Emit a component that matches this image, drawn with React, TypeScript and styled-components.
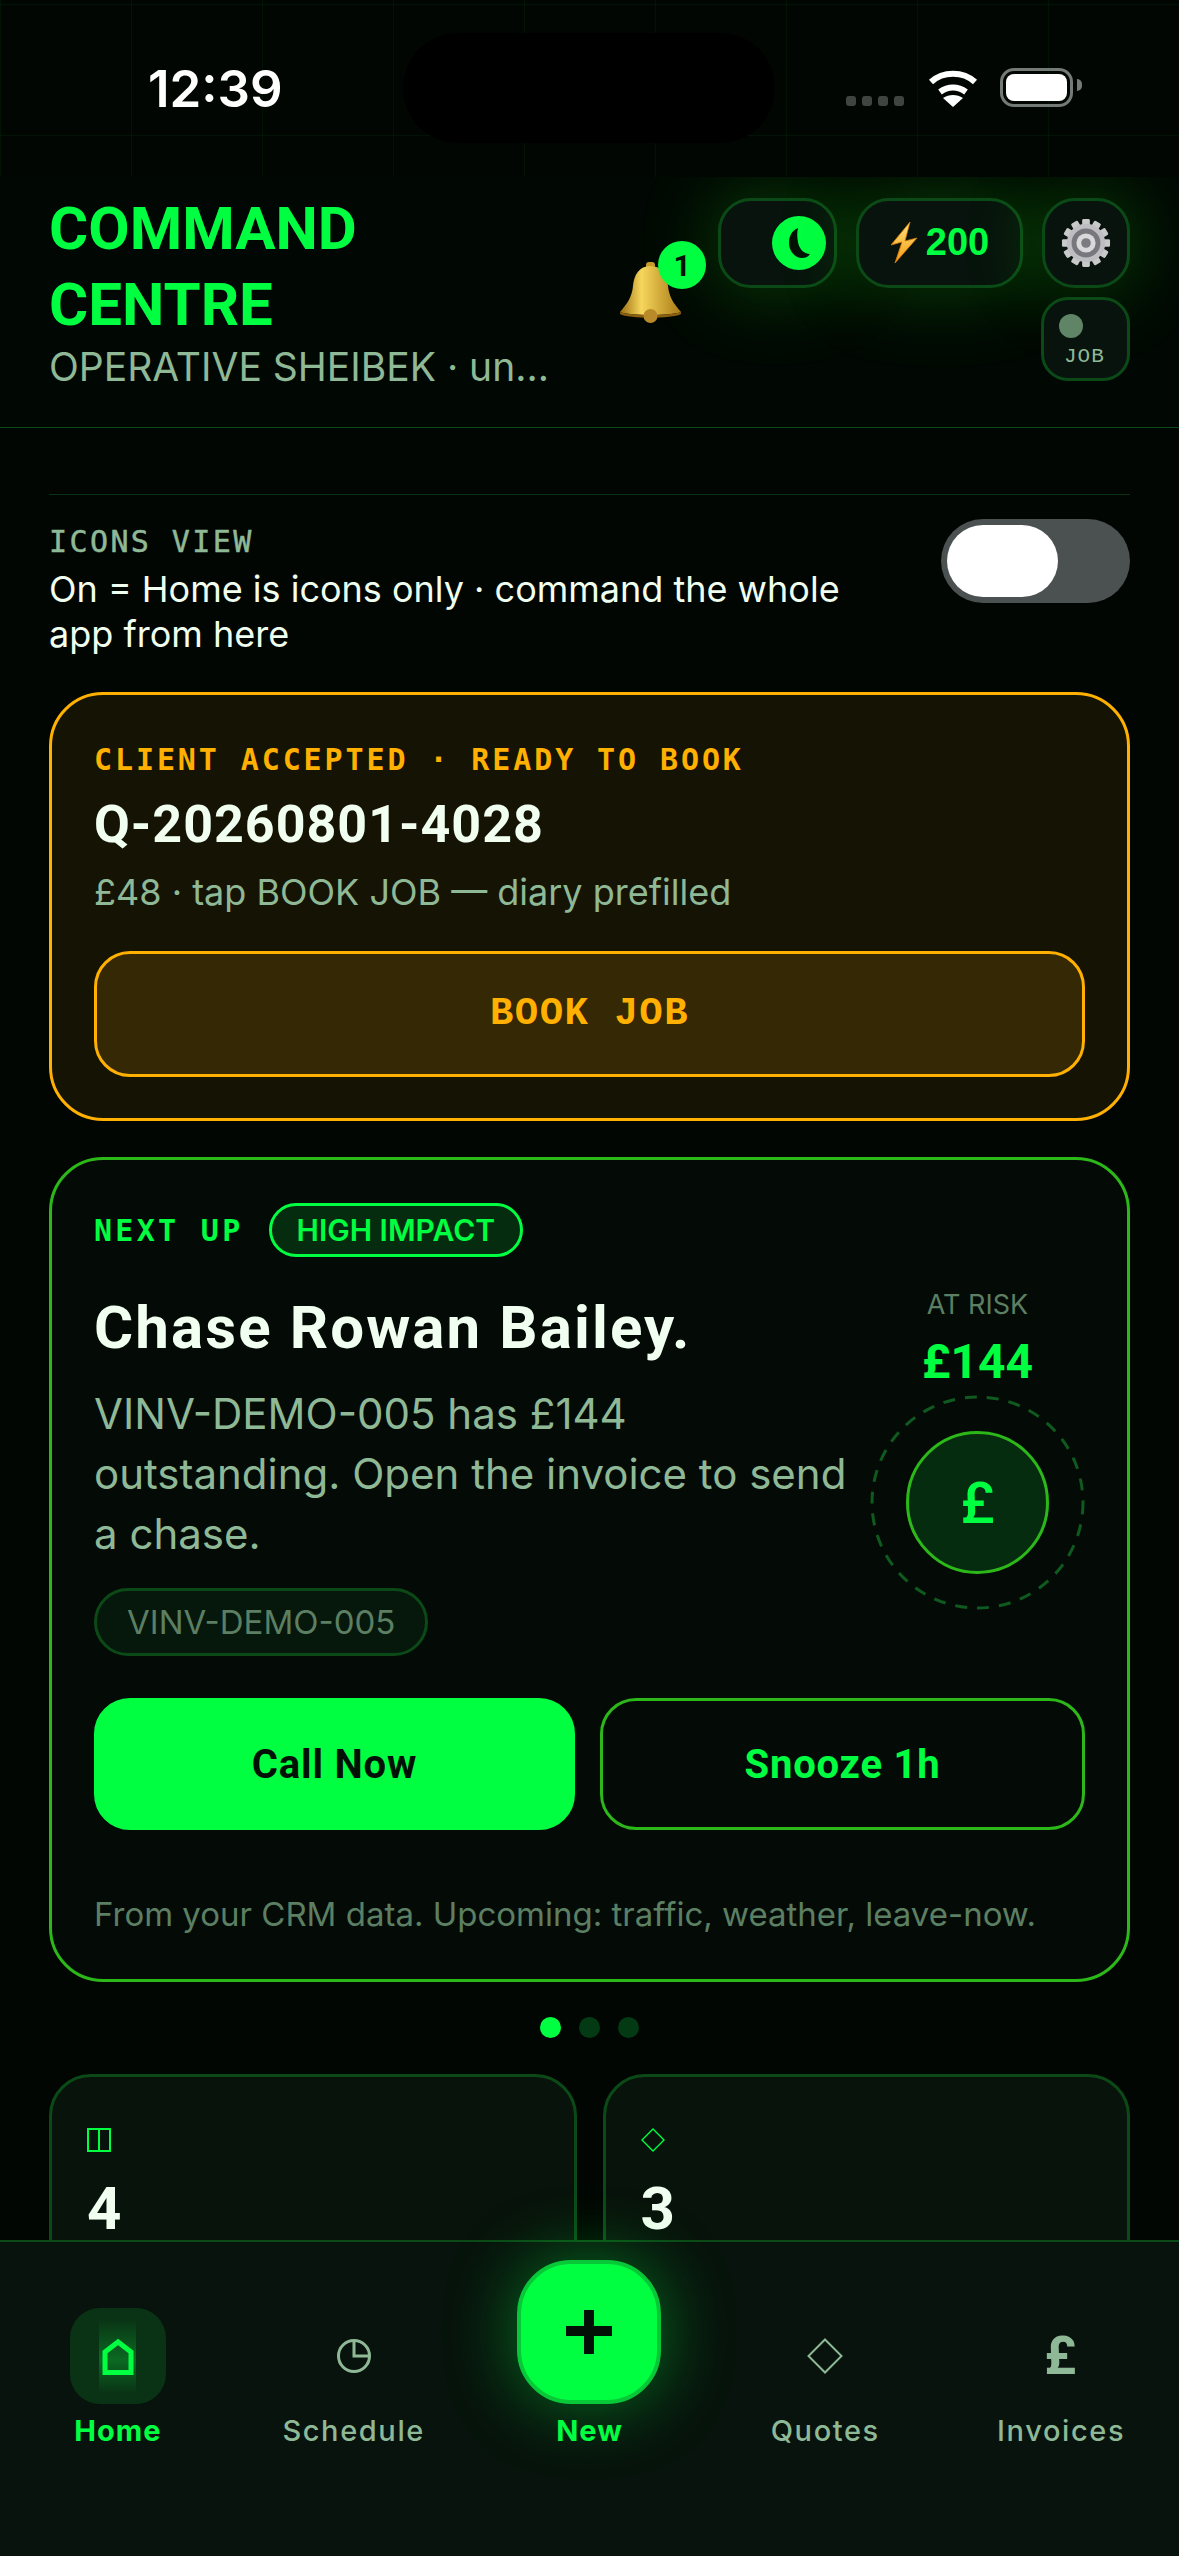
import React from 'react';
import styled, { createGlobalStyle } from 'styled-components';

const GREEN = '#00ff41';
const MUTED = '#8fb996';
const DIM = '#5c7f63';
const WHITE = '#f0fff0';
const AMBER = '#ffb000';
const LINE = '#0b4a17';
const RIM = '#2db81a';
const SANS = '"Inter", "Liberation Sans", sans-serif';
const HEAD = '"Roboto", "Liberation Sans", sans-serif';
const MONO = '"Liberation Mono", "DejaVu Sans Mono", monospace';
const LABEL = '"DejaVu Sans Mono", "Liberation Mono", monospace';

const GlobalStyle = createGlobalStyle`
  html, body {
    margin: 0;
    padding: 0;
    background: #010602;
  }
  * {
    box-sizing: border-box;
  }
`;

const Screen = styled.div`
  width: 1179px;
  height: 2556px;
  display: flex;
  flex-direction: column;
  overflow: hidden;
  background: #010602;
  font-family: ${SANS};
`;

const StatusBar = styled.div`
  height: 177px;
  flex: none;
  display: flex;
  align-items: flex-start;
  padding: 33px 0 0 148px;
  background-color: #010602;
  background-image:
    linear-gradient(rgba(0, 255, 65, 0.05) 1px, transparent 1px),
    linear-gradient(90deg, rgba(0, 255, 65, 0.05) 1px, transparent 1px);
  background-size: 131px 131px;
  background-position: 131px 135px;
`;

const Clock = styled.div`
  width: 255px;
  padding-top: 25px;
  font-size: 51px;
  line-height: 62px;
  font-weight: 600;
  color: #fff;
`;

const Island = styled.div`
  width: 372px;
  height: 110px;
  border-radius: 55px;
  background: #000;
`;

const StatusIcons = styled.div`
  height: 39px;
  margin: 35px 0 0 71px;
  display: flex;
  align-items: flex-end;
`;

const SignalDots = styled.div`
  display: flex;
  gap: 6px;
  margin: 0 24px 1px 0;
`;

const SignalDot = styled.span`
  width: 10px;
  height: 10px;
  border-radius: 3px;
  background: #3f4441;
`;

const BatteryShell = styled.div`
  position: relative;
  width: 73px;
  height: 39px;
  margin-left: 22px;
  padding: 3px;
  border: 3px solid #747a76;
  border-radius: 14px;
  &::after {
    content: '';
    position: absolute;
    right: -12px;
    top: 8px;
    width: 5px;
    height: 12px;
    border-radius: 0 6px 6px 0;
    background: #747a76;
  }
`;

const BatteryFill = styled.div`
  width: 100%;
  height: 100%;
  border-radius: 8px;
  background: #fff;
`;

const Header = styled.header`
  height: 251px;
  flex: none;
  display: flex;
  align-items: center;
  padding: 0 49px 26px;
  overflow: hidden;
  background: #010803;
  border-bottom: 1px solid ${LINE};
`;

const TitleBlock = styled.div`
  flex: 1;
  min-width: 0;
`;

const Title = styled.h1`
  margin: 0;
  padding-top: 2px;
  font-family: ${HEAD};
  font-size: 60px;
  line-height: 76px;
  font-weight: 700;
  color: ${GREEN};
`;

const Subtitle = styled.div`
  margin-top: 1px;
  font-size: 39px;
  line-height: 46px;
  color: ${MUTED};
`;

const BellWrap = styled.div`
  position: relative;
  width: 87px;
  height: 62px;
  margin: 8px 12px 0 0;
`;

const Badge = styled.span`
  position: absolute;
  top: -21px;
  right: 0;
  width: 48px;
  height: 48px;
  border-radius: 50%;
  display: flex;
  align-items: center;
  justify-content: center;
  background: ${GREEN};
  color: #021005;
  font-family: ${HEAD};
  font-size: 30px;
  font-weight: 700;
`;

const Actions = styled.div`
  display: flex;
  flex-direction: column;
  align-items: flex-end;
  gap: 9px;
`;

const ActionRow = styled.div`
  display: flex;
  gap: 19px;
`;

const Pill = styled.div<{ $w: number }>`
  width: ${(p) => p.$w}px;
  height: 90px;
  display: flex;
  align-items: center;
  justify-content: center;
  gap: 8px;
  border: 3px solid ${LINE};
  border-radius: 33px;
  background: #07130c;
  box-shadow: 0 0 70px 10px rgba(30, 210, 20, 0.22);
`;

const MoonPill = styled(Pill)`
  justify-content: flex-end;
  padding-right: 8px;
`;

const MoonKnob = styled.div`
  width: 54px;
  height: 54px;
  border-radius: 50%;
  display: flex;
  align-items: center;
  justify-content: center;
  background: ${GREEN};
`;

const BoltCount = styled.span`
  font-family: "Liberation Sans", sans-serif;
  font-size: 38px;
  font-weight: 700;
  color: ${GREEN};
`;

const JobPill = styled.div`
  width: 89px;
  height: 84px;
  padding: 14px 0 0 15px;
  border: 3px solid ${LINE};
  border-radius: 27px;
  background: #07130c;
`;

const JobDot = styled.div`
  width: 24px;
  height: 24px;
  border-radius: 50%;
  background: #5f8566;
`;

const JobLabel = styled.div`
  margin: 7px 0 0 5px;
  font-family: ${MONO};
  font-size: 21px;
  line-height: 24px;
  letter-spacing: 1px;
  color: ${MUTED};
`;

const Content = styled.main`
  flex: 1;
  min-height: 0;
  overflow: hidden;
  padding: 66px 49px 0;
`;

const ToggleSection = styled.section`
  display: flex;
  align-items: flex-start;
  justify-content: space-between;
  padding-top: 24px;
  border-top: 1px solid #0a3313;
`;

const ToggleText = styled.div`
  width: 840px;
`;

const SectionLabel = styled.div`
  padding-top: 3px;
  font-family: ${LABEL};
  font-size: 30px;
  line-height: 40px;
  letter-spacing: 2.4px;
  -webkit-text-stroke: 0.5px ${MUTED};
  color: ${MUTED};
`;

const ToggleHelp = styled.div`
  margin-top: 5px;
  font-size: 36px;
  line-height: 45px;
  color: ${WHITE};
`;

const ToggleTrack = styled.div`
  width: 189px;
  height: 84px;
  padding: 6px;
  border-radius: 42px;
  background: #4b5150;
`;

const ToggleKnob = styled.div`
  width: 111px;
  height: 72px;
  border-radius: 36px;
  background: #fff;
`;

const BookCard = styled.section`
  margin-top: 35px;
  height: 429px;
  padding: 45px 42px 0;
  border: 3px solid ${AMBER};
  border-radius: 54px;
  background: #151404;
`;

const BookLabel = styled.div`
  font-family: ${LABEL};
  font-size: 30px;
  line-height: 40px;
  font-weight: 700;
  letter-spacing: 2.9px;
  color: ${AMBER};
`;

const QuoteRef = styled.div`
  margin-top: 14px;
  font-family: ${HEAD};
  font-size: 52px;
  line-height: 62px;
  font-weight: 700;
  letter-spacing: 1px;
  color: ${WHITE};
`;

const BookMeta = styled.div`
  margin-top: 14px;
  font-size: 36px;
  line-height: 44px;
  color: ${MUTED};
`;

const BookButton = styled.div`
  margin-top: 37px;
  height: 126px;
  display: flex;
  align-items: center;
  justify-content: center;
  border: 3px solid ${AMBER};
  border-radius: 36px;
  background: #352804;
  font-family: ${MONO};
  font-size: 39px;
  font-weight: 700;
  letter-spacing: 1.5px;
  color: ${AMBER};
`;

const NextCard = styled.section`
  margin-top: 36px;
  height: 825px;
  padding: 43px 42px 0;
  border: 3px solid ${RIM};
  border-radius: 54px;
  background: #040b06;
`;

const NextHead = styled.div`
  display: flex;
  align-items: center;
  gap: 25px;
`;

const NextLabel = styled.div`
  font-family: ${LABEL};
  font-size: 30px;
  font-weight: 700;
  letter-spacing: 3.3px;
  color: ${GREEN};
`;

const ImpactTag = styled.div`
  height: 54px;
  padding: 0 25px;
  display: flex;
  align-items: center;
  border: 3px solid ${GREEN};
  border-radius: 27px;
  background: #062c10;
  font-size: 30px;
  font-weight: 600;
  color: ${GREEN};
`;

const NextBody = styled.div`
  display: flex;
  justify-content: space-between;
  margin-top: 36px;
`;

const NextMain = styled.div`
  width: 765px;
`;

const NextTitle = styled.h2`
  margin: 0;
  font-family: ${HEAD};
  font-size: 60px;
  line-height: 70px;
  font-weight: 700;
  letter-spacing: 2.1px;
  color: ${WHITE};
`;

const NextText = styled.p`
  margin: 21px 0 0;
  font-size: 42px;
  line-height: 60px;
  color: ${MUTED};
`;

const RefChip = styled.div`
  display: inline-flex;
  align-items: center;
  height: 68px;
  margin-top: 24px;
  padding: 0 30px;
  border: 3px solid ${LINE};
  border-radius: 34px;
  background: #06170b;
  font-size: 33px;
  color: ${DIM};
`;

const RiskColumn = styled.div`
  width: 215px;
  display: flex;
  flex-direction: column;
  align-items: center;
`;

const RiskLabel = styled.div`
  margin-top: -5px;
  font-size: 27px;
  line-height: 34px;
  color: ${DIM};
`;

const RiskAmount = styled.div`
  margin-top: 11px;
  font-family: ${HEAD};
  font-size: 48px;
  line-height: 58px;
  font-weight: 700;
  color: ${GREEN};
`;

const RingOuter = styled.div`
  position: relative;
  width: 215px;
  height: 215px;
  margin-top: 4px;
  display: flex;
  align-items: center;
  justify-content: center;
`;

const RingDash = styled.svg`
  position: absolute;
  inset: 0;
`;

const RingInner = styled.div`
  width: 143px;
  height: 143px;
  display: flex;
  align-items: center;
  justify-content: center;
  border: 3px solid ${RIM};
  border-radius: 50%;
  background: #062c10;
  font-family: ${HEAD};
  font-size: 58px;
  font-weight: 500;
  color: ${GREEN};
`;

const ButtonRow = styled.div`
  display: grid;
  grid-template-columns: 481px 485px;
  gap: 25px;
  margin-top: 42px;
`;

const ActionButton = styled.div<{ $primary?: boolean }>`
  height: 132px;
  display: flex;
  align-items: center;
  justify-content: center;
  border: 3px solid ${(p) => (p.$primary ? GREEN : RIM)};
  border-radius: 36px;
  background: ${(p) => (p.$primary ? GREEN : 'transparent')};
  font-family: ${HEAD};
  font-size: 40px;
  font-weight: 700;
  letter-spacing: 0.8px;
  color: ${(p) => (p.$primary ? '#021005' : GREEN)};
`;

const NextFoot = styled.div`
  margin-top: 64px;
  font-size: 33px;
  line-height: 40px;
  color: ${DIM};
`;

const Dots = styled.div`
  display: flex;
  justify-content: center;
  gap: 18px;
  margin-top: 35px;
`;

const Dot = styled.span<{ $on?: boolean }>`
  width: 21px;
  height: 21px;
  border-radius: 50%;
  background: ${(p) => (p.$on ? GREEN : '#033a14')};
`;

const StatGrid = styled.div`
  display: grid;
  grid-template-columns: 1fr 1fr;
  gap: 26px;
  margin-top: 36px;
`;

const StatCard = styled.div`
  height: 300px;
  padding: 48px 35px;
  border: 3px solid ${LINE};
  border-radius: 42px;
  background: #08130b;
`;

const StatIcon = styled.div`
  height: 30px;
  display: flex;
  align-items: center;
`;

const StatNumber = styled.div`
  margin-top: 30px;
  font-family: ${HEAD};
  font-size: 60px;
  line-height: 48px;
  font-weight: 700;
  color: ${WHITE};
`;

const Nav = styled.nav`
  height: 316px;
  flex: none;
  display: grid;
  grid-template-columns: repeat(5, 1fr);
  align-items: start;
  padding-top: 17px;
  background: #07130c;
  border-top: 2px solid ${LINE};
`;

const NavItem = styled.div<{ $active?: boolean }>`
  height: 190px;
  display: flex;
  flex-direction: column;
  align-items: center;
  justify-content: flex-end;
  gap: 9px;
  font-family: ${SANS};
  font-size: 29px;
  line-height: 36px;
  font-weight: ${(p) => (p.$active ? 700 : 500)};
  letter-spacing: ${(p) => (p.$active ? '1px' : '1.6px')};
  color: ${(p) => (p.$active ? GREEN : MUTED)};
`;

const NavIconBox = styled.div<{ $active?: boolean }>`
  width: 96px;
  height: 96px;
  display: flex;
  align-items: center;
  justify-content: center;
  border-radius: 30px;
  background: ${(p) => (p.$active ? '#0a3315' : 'transparent')};
`;

const HomeGlow = styled.span`
  width: 37px;
  height: 74px;
  display: flex;
  align-items: center;
  justify-content: center;
  background: linear-gradient(#0a3315, #0b6a22 55%, #0a3315);
`;

const NavGlyph = styled.span`
  font-family: ${HEAD};
  font-size: 54px;
  font-weight: 700;
  color: ${MUTED};
`;

const NewButton = styled.div`
  width: 144px;
  height: 144px;
  display: flex;
  align-items: center;
  justify-content: center;
  border: 4px solid #08c838;
  border-radius: 54px;
  background: ${GREEN};
  box-shadow: 0 0 70px rgba(0, 255, 65, 0.4);
`;

function BellIcon() {
  return (
    <svg width="63" height="62" viewBox="0 0 63 62">
      <defs>
        <linearGradient id="bellBody" x1="0" x2="1" y1="0" y2="0">
          <stop offset="0" stopColor="#9a6d12" />
          <stop offset="0.35" stopColor="#f6d65c" />
          <stop offset="1" stopColor="#a97a16" />
        </linearGradient>
      </defs>
      <rect x="27" y="0" width="9" height="7" rx="3" fill="#c79a2a" />
      <path d="M31.5 4C20 4 15 13 14 24c-1 11-6 18-13 26 9 4 52 4 61 0-7-8-12-15-13-26C48 13 43 4 31.5 4Z" fill="url(#bellBody)" />
      <path d="M1 50c9 4 52 4 61 0l0 2c-9 5-52 5-61 0Z" fill="#8a5f10" />
      <circle cx="31.5" cy="54" r="7" fill="#b98a2a" />
    </svg>
  );
}

function MoonIcon() {
  return (
    <svg width="21" height="30" viewBox="0 0 21 30">
      <path d="M9 0C2 3 0 9 0 15c0 8 6 15 13 15 3 0 6-1 8-4-6 0-11-5-12-12C8 9 8 4 9 0Z" fill="#021005" />
    </svg>
  );
}

function BoltIcon() {
  return (
    <svg width="28" height="41" viewBox="0 0 28 41">
      <defs>
        <linearGradient id="boltFill" x1="0" x2="0" y1="0" y2="1">
          <stop offset="0" stopColor="#ffe27a" />
          <stop offset="1" stopColor="#f59a12" />
        </linearGradient>
      </defs>
      <path d="M20 0 1 23l11-3L5 41l22-25-12 3 5-19Z" fill="url(#boltFill)" stroke="#d97a06" strokeWidth="0.8" />
    </svg>
  );
}

function GearIcon() {
  const teeth = Array.from({ length: 12 }, (_, i) => i * 30);
  return (
    <svg width="52" height="50" viewBox="0 0 52 52">
      {teeth.map((a) => (
        <rect key={a} x="22" y="1" width="8" height="10" rx="1.5" fill="#c9c9cc" transform={`rotate(${a} 26 26)`} />
      ))}
      <circle cx="26" cy="26" r="20" fill="#bdbdc2" />
      <circle cx="26" cy="26" r="15" fill="#77777d" />
      <circle cx="26" cy="26" r="10" fill="#d9d9dc" />
      <circle cx="26" cy="26" r="5" fill="#7b7b80" />
    </svg>
  );
}

function WifiIcon() {
  return (
    <svg width="50" height="37" viewBox="0 0 50 37" fill="none" stroke="#fff" strokeWidth="6">
      <path d="M3 12C15 1 35 1 47 12" />
      <path d="M12 22c8-6 18-6 26 0" />
      <path d="M25 37 15 28c6-4 14-4 20 0Z" fill="#fff" stroke="none" />
    </svg>
  );
}

function PanelIcon() {
  return (
    <svg width="24" height="24" viewBox="0 0 24 24" fill="none" stroke={GREEN} strokeWidth="2">
      <rect x="1" y="1" width="22" height="22" />
      <path d="M12 1v22" />
    </svg>
  );
}

function DiamondIcon({ size, color, weight }: { size: number; color: string; weight: number }) {
  return (
    <svg width={size} height={size} viewBox="0 0 24 24" fill="none" stroke={color} strokeWidth={weight}>
      <path d="M12 1 23 12 12 23 1 12Z" />
    </svg>
  );
}

function HomeIcon() {
  return (
    <svg width="32" height="37" viewBox="0 0 32 37" fill="none" stroke={GREEN} strokeWidth="5">
      <path d="M3 34.5V14L16 4l13 10v20.5Z" />
    </svg>
  );
}

function ClockIcon() {
  return (
    <svg width="36" height="36" viewBox="0 0 36 36" fill="none" stroke={MUTED} strokeWidth="3">
      <circle cx="18" cy="18" r="15.5" />
      <path d="M18 3v15h15" />
    </svg>
  );
}

function PlusIcon() {
  return (
    <svg width="46" height="44" viewBox="0 0 46 44" fill="#021005">
      <rect x="18" y="0" width="10" height="44" />
      <rect x="0" y="16" width="46" height="10" />
    </svg>
  );
}

export default function App() {
  return (
    <Screen>
      <GlobalStyle />
      <StatusBar>
        <Clock>12:39</Clock>
        <Island />
        <StatusIcons>
          <SignalDots>
            <SignalDot />
            <SignalDot />
            <SignalDot />
            <SignalDot />
          </SignalDots>
          <WifiIcon />
          <BatteryShell>
            <BatteryFill />
          </BatteryShell>
        </StatusIcons>
      </StatusBar>

      <Header>
        <TitleBlock>
          <Title>
            COMMAND
            <br />
            CENTRE
          </Title>
          <Subtitle>OPERATIVE SHEIBEK · un...</Subtitle>
        </TitleBlock>
        <BellWrap>
          <BellIcon />
          <Badge>1</Badge>
        </BellWrap>
        <Actions>
          <ActionRow>
            <MoonPill $w={119}>
              <MoonKnob>
                <MoonIcon />
              </MoonKnob>
            </MoonPill>
            <Pill $w={167}>
              <BoltIcon />
              <BoltCount>200</BoltCount>
            </Pill>
            <Pill $w={88}>
              <GearIcon />
            </Pill>
          </ActionRow>
          <JobPill>
            <JobDot />
            <JobLabel>JOB</JobLabel>
          </JobPill>
        </Actions>
      </Header>

      <Content>
        <ToggleSection>
          <ToggleText>
            <SectionLabel>ICONS VIEW</SectionLabel>
            <ToggleHelp>On = Home is icons only · command the whole app from here</ToggleHelp>
          </ToggleText>
          <ToggleTrack>
            <ToggleKnob />
          </ToggleTrack>
        </ToggleSection>

        <BookCard>
          <BookLabel>CLIENT ACCEPTED · READY TO BOOK</BookLabel>
          <QuoteRef>Q-20260801-4028</QuoteRef>
          <BookMeta>£48 · tap BOOK JOB — diary prefilled</BookMeta>
          <BookButton>BOOK JOB</BookButton>
        </BookCard>

        <NextCard>
          <NextHead>
            <NextLabel>NEXT UP</NextLabel>
            <ImpactTag>HIGH IMPACT</ImpactTag>
          </NextHead>
          <NextBody>
            <NextMain>
              <NextTitle>Chase Rowan Bailey.</NextTitle>
              <NextText>VINV-DEMO-005 has £144 outstanding. Open the invoice to send a chase.</NextText>
              <RefChip>VINV-DEMO-005</RefChip>
            </NextMain>
            <RiskColumn>
              <RiskLabel>AT RISK</RiskLabel>
              <RiskAmount>£144</RiskAmount>
              <RingOuter>
                <RingDash width="215" height="215" viewBox="0 0 215 215" fill="none">
                  <circle cx="107.5" cy="107.5" r="105.5" stroke="#0f5a1f" strokeWidth="3" strokeDasharray="12 10" />
                </RingDash>
                <RingInner>£</RingInner>
              </RingOuter>
            </RiskColumn>
          </NextBody>
          <ButtonRow>
            <ActionButton $primary>Call Now</ActionButton>
            <ActionButton>Snooze 1h</ActionButton>
          </ButtonRow>
          <NextFoot>From your CRM data. Upcoming: traffic, weather, leave-now.</NextFoot>
        </NextCard>

        <Dots>
          <Dot $on />
          <Dot />
          <Dot />
        </Dots>

        <StatGrid>
          <StatCard>
            <StatIcon>
              <PanelIcon />
            </StatIcon>
            <StatNumber>4</StatNumber>
          </StatCard>
          <StatCard>
            <StatIcon>
              <DiamondIcon size={24} color={GREEN} weight={1.4} />
            </StatIcon>
            <StatNumber>3</StatNumber>
          </StatCard>
        </StatGrid>
      </Content>

      <Nav>
        <NavItem $active>
          <NavIconBox $active>
            <HomeGlow>
              <HomeIcon />
            </HomeGlow>
          </NavIconBox>
          Home
        </NavItem>
        <NavItem>
          <NavIconBox>
            <ClockIcon />
          </NavIconBox>
          Schedule
        </NavItem>
        <NavItem $active>
          <NewButton>
            <PlusIcon />
          </NewButton>
          New
        </NavItem>
        <NavItem>
          <NavIconBox>
            <DiamondIcon size={36} color={MUTED} weight={1.3} />
          </NavIconBox>
          Quotes
        </NavItem>
        <NavItem>
          <NavIconBox>
            <NavGlyph>£</NavGlyph>
          </NavIconBox>
          Invoices
        </NavItem>
      </Nav>
    </Screen>
  );
}
